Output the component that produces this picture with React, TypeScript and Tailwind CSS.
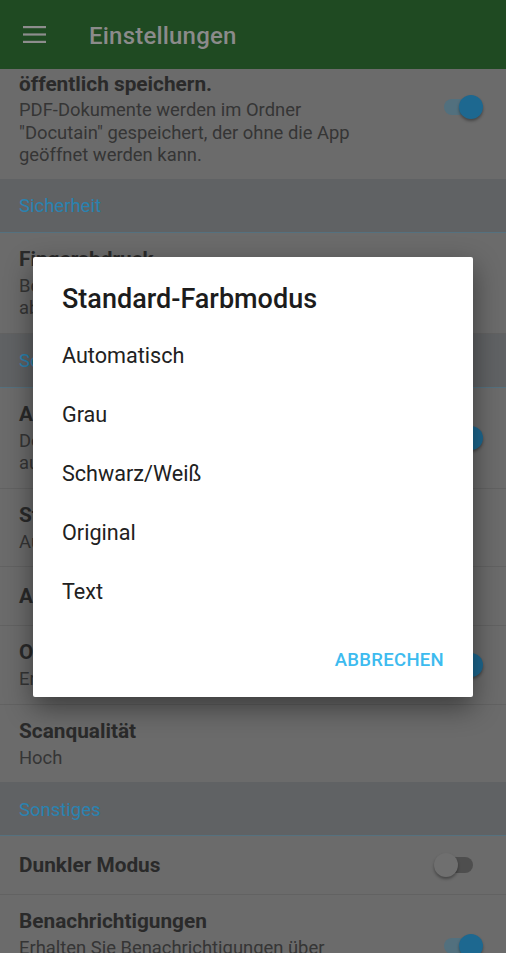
import React from 'react'

type RowProps = {
  title: string
  desc?: string
  toggle?: 'on' | 'off'
  last?: boolean
}

function Toggle({ on }: { on: boolean }) {
  return (
    <div className={`relative w-[44px] h-[24px] shrink-0 ${on ? 'mr-[23px]' : 'mr-[28px]'}`}>
      <div
        className={`absolute left-[5px] right-[5px] top-[4px] h-[16px] rounded-full ${
          on ? 'bg-[#52707e]' : 'bg-[#4e4e4e]'
        }`}
      />
      <div
        className={`absolute top-0 w-[24px] h-[24px] rounded-full shadow-[0_2px_3px_rgba(0,0,0,0.35)] ${
          on ? 'right-0 bg-[#1d6890]' : 'left-0 bg-[#6f6f6f]'
        }`}
      />
    </div>
  )
}

function Row({ title, desc, toggle, last }: RowProps) {
  return (
    <div
      className={`flex items-center ${last ? '' : 'border-b border-[#626262]'} ${
        desc ? 'pt-[14px] pb-[13px]' : 'py-[17px]'
      }`}
    >
      <div className="flex-1 pl-[19px] pr-4">
        <div className="text-[20.8px] leading-[24px] font-bold text-[#2a2a2a]">{title}</div>
        {desc && (
          <div className="mt-[4px] text-[18.4px] leading-[22.5px] text-[#353535] max-w-[335px]">
            {desc}
          </div>
        )}
      </div>
      {toggle && <Toggle on={toggle === 'on'} />}
    </div>
  )
}

function Section({ label }: { label: string }) {
  return (
    <div className="h-[54px] flex items-center pl-[19px] pt-[4px] bg-[#606264] border-b border-[#55717f]">
      <span className="text-[18.5px] text-[#2a82b0]">{label}</span>
    </div>
  )
}

const colorModes = ['Automatisch', 'Grau', 'Schwarz/Weiß', 'Original', 'Text']

export default function App() {
  return (
    <div
      className="relative w-[506px] h-[953px] overflow-hidden bg-[#6b6b6b] flex flex-col"
      style={{ fontFamily: 'Roboto, "Noto Sans", sans-serif' }}
    >
      <header className="h-[69px] shrink-0 bg-[#1f4a22] flex items-center z-10">
        <svg width="23" height="17" viewBox="0 0 23 17" className="ml-[23px] -mt-[1px]">
          <rect x="0" y="0" width="23" height="2.2" fill="#8d8d8d" />
          <rect x="0" y="7.4" width="23" height="2.2" fill="#8d8d8d" />
          <rect x="0" y="14.8" width="23" height="2.2" fill="#8d8d8d" />
        </svg>
        <h1 className="ml-[43px] mt-[3px] text-[24px] font-medium text-[#8b8b8b] tracking-[0.2px]">
          Einstellungen
        </h1>
      </header>

      <main className="flex-1 overflow-hidden">
        <div className="-mt-[35px]">
          <div className="flex items-center pt-[14px] pb-[12px]">
            <div className="flex-1 pl-[19px] pr-4">
              <div className="text-[20.8px] leading-[24px] font-bold text-[#2a2a2a]">
                PDF-Dokumente
                <br />
                öffentlich speichern.
              </div>
              <div className="mt-[3px] text-[18.4px] leading-[22.5px] text-[#353535] max-w-[350px]">
                PDF-Dokumente werden im Ordner "Docutain" gespeichert, der ohne die App geöffnet werden kann.
              </div>
            </div>
            <Toggle on />
          </div>

          <Section label="Sicherheit" />
          <Row
            title="Fingerabdruck"
            desc="Beim Öffnen der App den Fingerabdruck abfragen"
            toggle="off"
          />
          <Section label="Scannen" />
          <Row
            title="Automatische Erkennung"
            desc="Dokumente werden beim Scannen automatisch erkannt"
            toggle="on"
          />
          <Row title="Standard-Farbmodus" desc="Automatisch" />
          <Row title="Automatische Aufnahme" />
          <Row title="OCR-Texterkennung" desc="Erkennt Text in Dokumenten" toggle="on" />
          <Row title="Scanqualität" desc="Hoch" last />
          <Section label="Sonstiges" />
          <Row title="Dunkler Modus" toggle="off" />
          <Row
            title="Benachrichtigungen"
            desc="Erhalten Sie Benachrichtigungen über neue Funktionen"
            toggle="on"
            last
          />
        </div>
      </main>

      <div className="absolute inset-0 z-20 flex items-center justify-center">
        <div className="w-[440px] h-[440px] bg-white rounded-[2px] shadow-[0_10px_28px_rgba(0,0,0,0.45)] flex flex-col">
          <h2 className="pl-[29px] pt-[26px] text-[27px] leading-[32px] font-medium text-[#1c1c1c]">
            Standard-Farbmodus
          </h2>
          <ul className="mt-[12px]">
            {colorModes.map((mode) => (
              <li
                key={mode}
                className="h-[59px] flex items-center pl-[29px] text-[21.6px] text-[#212121]"
              >
                {mode}
              </li>
            ))}
          </ul>
          <div className="flex-1 flex justify-end items-start pt-[26px] pr-[21px]">
            <button className="px-2 text-[18.5px] leading-[24px] font-medium text-[#3dbbef] tracking-[0.3px]">
              ABBRECHEN
            </button>
          </div>
        </div>
      </div>
    </div>
  )
}
